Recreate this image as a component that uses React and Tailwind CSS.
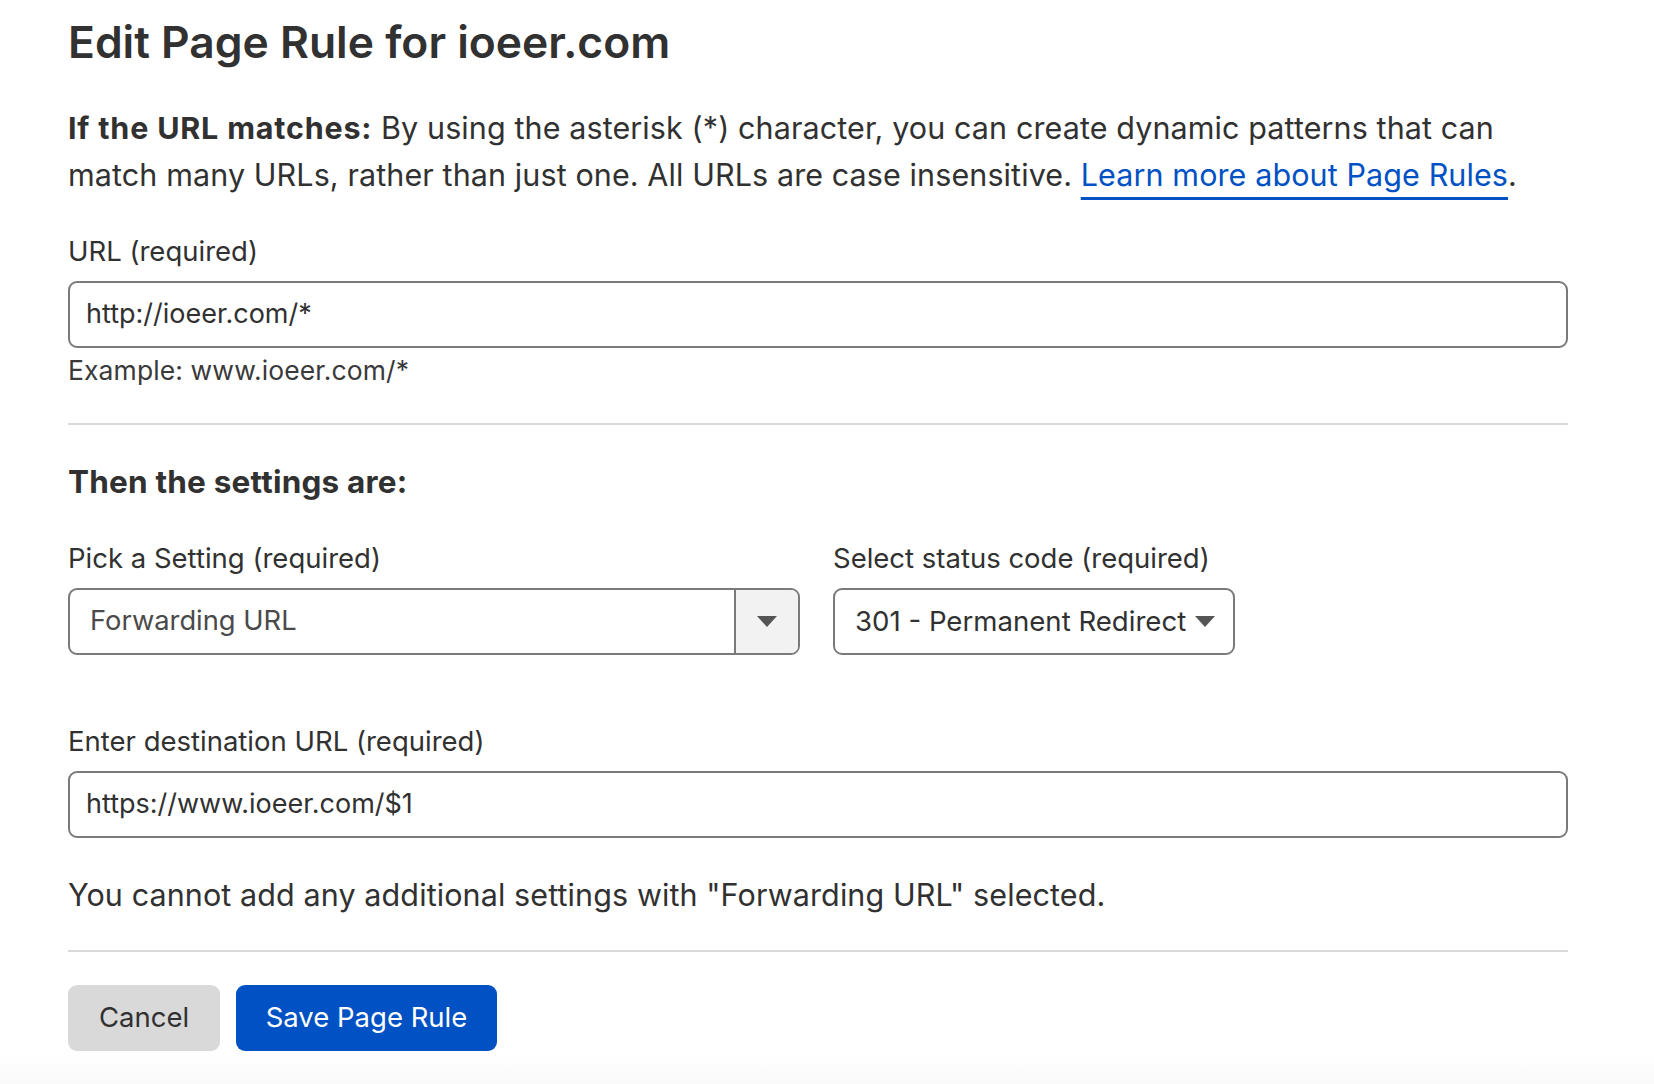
import React from 'react';

function Caret() {
  return (
    <svg width="20" height="11" viewBox="0 0 20 11" className="shrink-0">
      <path d="M0 0 L20 0 L10 11 Z" fill="#555555" />
    </svg>
  );
}

export default function App() {
  return (
    <div className="min-h-screen flex flex-col bg-white text-[#313131]" style={{ fontFamily: 'Inter, "Noto Sans", sans-serif' }}>
      <div className="pl-[68px] pt-[16px] w-[1568px]">
        {/* Title */}
        <h1 className="text-[44.4px] leading-[52px] font-semibold">Edit Page Rule for ioeer.com</h1>

        {/* Intro */}
        <p className="mt-[36px] text-[30.5px] leading-[47px] tracking-[0.1px]">
          <span className="font-bold tracking-[0.8px]">If the URL matches:</span> By using the asterisk (*) character, you can create dynamic patterns that can
          match many URLs, rather than just one. All URLs are case insensitive.{' '}
          <a href="#" className="text-[#0051c3] underline decoration-[3px] underline-offset-[11px]">Learn more about Page Rules</a>.
        </p>

        {/* URL */}
        <label className="block mt-[35px] text-[27.5px] leading-[36px]">URL (required)</label>
        <div className="mt-[12px] h-[67px] border-2 border-[#7a7a7a] rounded-[9px] flex items-center pl-[16px] text-[27px]">
          http://ioeer.com/*
        </div>
        <p className="mt-[5px] text-[26.5px] leading-[34px] tracking-[0.1px] text-[#3a3a3a]">Example: www.ioeer.com/*</p>

        <div className="mt-[36px] h-[2px] bg-[#d9d9d9]" />

        {/* Settings */}
        <h2 className="mt-[37px] text-[31.5px] leading-[40px] font-bold tracking-[0.2px]">Then the settings are:</h2>

        <div className="mt-[38px] flex gap-[33px]">
          <div className="w-[732px]">
            <label className="block text-[27.5px] leading-[36px]">Pick a Setting (required)</label>
            <div className="mt-[12px] h-[67px] border-2 border-[#7a7a7a] rounded-[9px] flex overflow-hidden">
              <div className="flex-1 flex items-center pl-[20px] text-[27.3px] text-[#4a4a4a]">Forwarding URL</div>
              <div className="w-[64px] border-l-2 border-[#7a7a7a] bg-[#f2f2f2] flex items-center justify-center">
                <Caret />
              </div>
            </div>
          </div>
          <div className="w-[402px]">
            <label className="block text-[27.5px] leading-[36px]">Select status code (required)</label>
            <div className="mt-[12px] h-[67px] border-2 border-[#7a7a7a] rounded-[9px] flex items-center justify-between pl-[20px] pr-[18px] text-[27.6px]">
              <span>301 - Permanent Redirect</span>
              <Caret />
            </div>
          </div>
        </div>

        {/* Destination */}
        <label className="block mt-[68px] text-[27.5px] leading-[36px]">Enter destination URL (required)</label>
        <div className="mt-[12px] h-[67px] border-2 border-[#7a7a7a] rounded-[9px] flex items-center pl-[16px] text-[27px]">
          https://www.ioeer.com/$1
        </div>

        <p className="mt-[37px] text-[30.5px] leading-[40px] tracking-[0.1px]">You cannot add any additional settings with "Forwarding URL" selected.</p>

        <div className="mt-[35px] h-[2px] bg-[#d9d9d9]" />

        {/* Actions */}
        <div className="mt-[33px] flex gap-[16px]">
          <button className="w-[152px] h-[66px] rounded-[9px] bg-[#d9d9d9] text-[27.5px] text-[#313131]">Cancel</button>
          <button className="w-[261px] h-[66px] rounded-[9px] bg-[#0051c3] text-[27.5px] text-white">Save Page Rule</button>
        </div>
      </div>
      <div className="flex-1 bg-gradient-to-b from-white to-[#fafafa]" />
    </div>
  );
}
